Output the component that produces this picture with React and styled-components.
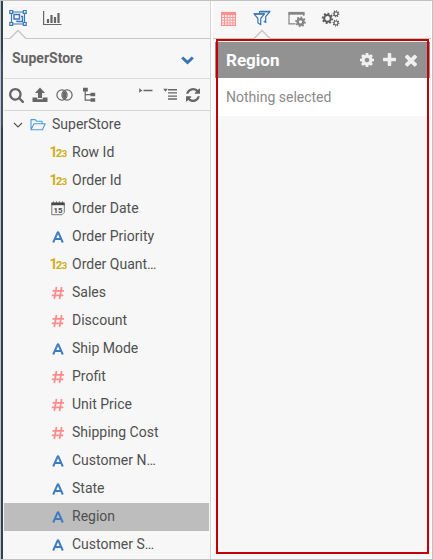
import React from "react";
import styled, { createGlobalStyle } from "styled-components";

const Global = createGlobalStyle`
  * { box-sizing: border-box; }
  body { margin: 0; font-family: Roboto, "Liberation Sans", sans-serif; color: #555; }
`;

const Frame = styled.div`
  display: flex;
  width: 433px;
  height: 560px;
  overflow: hidden;
  background: #fff;
  border: 1px solid #c2c2c2;
`;
const Rail = styled.div`
  width: 2px;
  background: linear-gradient(#2d4350 0 47px, #3d5168 62px 100px, #3d5168 124px, #2d4350 128px);
`;
const LeftPanel = styled.section`
  width: 208px;
  padding-left: 1px;
  display: flex;
  flex-direction: column;
  background: #f7f7f7;
  border-right: 1px solid #d4d4d4;
`;
const RightPanel = styled.section`
  width: 219px;
  margin-left: 2px;
  background: #f7f7f7;
  border-right: 1px solid #fff;
`;
const Tabs = styled.nav`
  display: flex;
  height: 38px;
  border-bottom: 1px solid #c6c6c6;
`;
const Tab = styled.div`
  position: relative;
  width: ${(p) => p.$w}px;
  padding: 8px 0 0 ${(p) => p.$pad || 0}px;
`;
const Pointer = styled.svg`
  position: absolute;
  left: ${(p) => p.$x}px;
  top: 28px;
  display: block;
`;
const Glyph = styled.svg`
  display: block;
  flex: none;
  margin-left: ${(p) => p.$ml || 0}px;
  margin-top: ${(p) => p.$mt || 0}px;
  overflow: visible;
`;
const Source = styled.div`
  display: flex;
  align-items: center;
  justify-content: space-between;
  height: 40px;
  padding: 0 16px 2px 8px;
  font-size: 14px;
  font-weight: 700;
  color: #666;
  border-bottom: 1px solid #dcdcdc;
`;
const Tools = styled.div`
  display: flex;
  height: 32px;
  padding: 8px 0 0 5px;
  color: #666;
  border-bottom: 1px solid #d6d6d6;
`;
const Tree = styled.div`
  height: 448px;
`;
const Row = styled.div`
  display: flex;
  align-items: center;
  height: 28px;
  margin-right: 1px;
  padding-left: ${(p) => (p.$root ? 9 : 44)}px;
  font-size: 14px;
  color: #505050;
  background: ${(p) => (p.$selected ? "#bdbdbd" : "transparent")};
`;
const RowIcon = styled.span`
  display: flex;
  justify-content: center;
  align-items: center;
  width: 20px;
  height: 20px;
  margin-right: 4px;
`;
const Label = styled.span`
  white-space: nowrap;
  line-height: 18px;
  margin: -3px 0 0 ${(p) => p.$ml || 0}px;
`;
const Numeric = styled.span`
  display: flex;
  align-items: baseline;
  color: #cfaf22;
  font-weight: 700;
  line-height: 14px;
  font-size: 14px;
  letter-spacing: -1.8px;
`;
const Small = styled.span`
  font-size: ${(p) => p.$size}px;
  letter-spacing: -0.6px;
`;
const Highlight = styled.div`
  position: relative;
  height: 515px;
  margin: 0 1px 0 2px;

  &::after {
    content: "";
    position: absolute;
    inset: 0 1px;
    border: 2px solid #c40000;
  }
`;
const FilterHead = styled.header`
  display: flex;
  align-items: center;
  height: 39px;
  padding: 0 13px 0 11px;
  border-top: 3px solid #f7f7f7;
  background: #929292;
  color: #f0f0f0;
  font-size: 17px;
  font-weight: 700;
`;
const HeadTitle = styled.span`
  flex: 1;
  color: #fff;
`;
const FilterBody = styled.div`
  height: 38px;
  padding: 0 11px;
  line-height: 38px;
  font-size: 14px;
  color: #8a8a8a;
  background: #fff;
`;

const FA = {
  search: "M1216 832q0-185-131.500-316.500t-316.500-131.500-316.500 131.500-131.500 316.500 131.500 316.500 316.500 131.500 316.500-131.500 131.500-316.500zm512 832q0 52-38 90t-90 38q-54 0-90-38l-343-342q-179 124-399 124-143 0-273.500-55.500t-225-150-150-225-55.500-273.500 55.500-273.500 150-225 225-150 273.500-55.500 273.500 55.500 225 150 150 225 55.500 273.500q0 220-124 399l343 343q37 37 37 90z",
  refresh: "M1639 1056q0 5-1 7-64 268-268 434.500t-478 166.500q-146 0-282.500-55t-243.500-157l-129 129q-19 19-45 19t-45-19-19-45v-448q0-26 19-45t45-19h448q26 0 45 19t19 45-19 45l-137 137q71 66 161 102t187 36q134 0 250-65t186-179q11-17 53-117 8-23 30-23h192q13 0 22.500 9.500t9.500 22.500zm25-800v448q0 26-19 45t-45 19h-448q-26 0-45-19t-19-45 19-45l138-138q-148-137-349-137-134 0-250 65t-186 179q-11 17-53 117-8 23-30 23h-199q-13 0-22.500-9.500t-9.500-22.500v-7q65-268 270-434.500t480-166.500q146 0 284 55.500t245 156.500l130-129q19-19 45-19t45 19 19 45z",
  cog: "M1152 896q0-106-75-181t-181-75-181 75-75 181 75 181 181 75 181-75 75-181zm512-109v222q0 12-8 23t-20 13l-185 28q-19 54-39 91 35 50 107 138 10 12 10 25t-9 23q-27 37-99 108t-94 71q-12 0-26-9l-138-108q-44 23-91 38-16 136-29 186-7 28-36 28h-222q-14 0-24.500-8.500t-11.500-21.500l-28-184q-49-16-90-37l-141 107q-10 9-25 9-14 0-25-11-126-114-165-168-7-10-7-23 0-12 8-23 15-21 51-66.500t54-70.500q-27-50-41-99l-183-27q-13-2-21-12.500t-8-23.500v-222q0-12 8-23t19-13l186-28q14-46 39-92-40-57-107-138-10-12-10-24 0-10 9-23 26-36 98.500-107.500t94.500-71.500q13 0 26 10l138 107q44-23 91-38 16-136 29-186 7-28 36-28h222q14 0 24.500 8.500t11.500 21.500l28 184q49 16 90 37l142-107q9-9 24-9 13 0 25 10 129 119 165 170 7 8 7 22 0 12-8 23-15 21-51 66.500t-54 70.500q26 50 41 98l183 28q13 2 21 12.500t8 23.500z",
  plus: "M1600 736v192q0 40-28 68t-68 28h-416v416q0 40-28 68t-68 28h-192q-40 0-68-28t-28-68v-416h-416q-40 0-68-28t-28-68v-192q0-40 28-68t68-28h416v-416q0-40 28-68t68-28h192q40 0 68 28t28 68v416h416q40 0 68 28t28 68z",
  times: "M1490 1322q0 40-28 68l-136 136q-28 28-68 28t-68-28l-294-294-294 294q-28 28-68 28t-68-28l-136-136q-28-28-28-68t28-68l294-294-294-294q-28-28-28-68t28-68l136-136q28-28 68-28t68 28l294 294 294-294q28-28 68-28t68 28l136 136q28 28 28 68t-28 68l-294 294 294 294q28 28 28 68z",
};

const Fa = ({ name, size, box = "0 0 1792 1792", ...rest }) => (
  <Glyph width={size} height={size} viewBox={box} fill="currentColor" {...rest}>
    <path d={FA[name]} />
  </Glyph>
);

const Caret = ({ x }) => (
  <Pointer $x={x} width="18" height="10" viewBox="0 0 18 10">
    <path d="M1 10 9 1.500 17 10z" fill="#f7f7f7" />
    <path d="M1 9.500 9 1.500 17 9.500" fill="none" stroke="#c6c6c6" strokeWidth="1.300" />
  </Pointer>
);

const GroupIcon = () => (
  <Glyph width="18" height="18" viewBox="0 0 18 18" fill="none" stroke="#3a78b8">
    <path d="M2.500 3h13v12h-13z" strokeWidth="1.200" />
    <path d="M5 5.500h5.500v4.500H5zM12 7.500h1.500v5H8V11.500" strokeWidth="1.400" />
    <g fill="#f7f7f7" strokeWidth="1.200">
      <path d="M.8 1.500h2.900v2.900H.8zM14.300 1.500h2.900v2.900h-2.900zM.8 13.500h2.900v2.900H.8zM14.300 13.500h2.900v2.900h-2.900z" />
    </g>
  </Glyph>
);
const ChartIcon = () => (
  <Glyph width="19" height="18" viewBox="0 0 19 18" fill="none" stroke="#666">
    <path d="M.6 2v13.500H18.500" strokeWidth="1.200" />
    <path d="M5 14v-4M8.500 14V6M12 14V8M15.500 14V4" strokeWidth="2.200" />
  </Glyph>
);
const GridIcon = () => (
  <Glyph width="15" height="18" viewBox="0 0 15 18" fill="none" stroke="#ff8f8f">
    <path d="M0 4.500h15" strokeWidth="3.200" />
    <path d="M.6 4v12.400h13.800V4" strokeWidth="1.200" />
    <path d="M3.500 6v10M6.300 6v10M9 6v10M11.800 6v10M.5 8.500h14M.5 11.200h14M.5 13.900h14" strokeWidth=".9" />
  </Glyph>
);
const FilterIcon = () => (
  <Glyph width="18" height="18" viewBox="0 0 18 18" fill="none" stroke="#3a78b8" strokeWidth="1.200" strokeLinejoin="round">
    <path d="M6.500 4V2.500H17L12.700 7.700v5.800L10.800 12" />
    <path d="M1 4.800h10.500L7.700 9.500v6.200L4.900 13.800V9.500z" fill="#f7f7f7" />
    <path d="M1 5h10.500M7 2.700H17" strokeWidth="1.700" />
  </Glyph>
);
const WindowGearIcon = () => (
  <Glyph width="18" height="18" viewBox="0 0 18 18" fill="none" stroke="#858585">
    <path d="M7.500 14.800H1V4H15.800V7" strokeWidth="1.200" />
    <path d="M.5 4.300h16" strokeWidth="2.800" />
    <g transform="translate(12.500 12.800)">
      <circle r="2.900" strokeWidth="2.500" />
      <circle r="4.500" strokeWidth="1.700" pathLength="16" strokeDasharray="1 1" />
    </g>
  </Glyph>
);
const Gear = ({ x, y, r, w }) => (
  <g transform={`translate(${x} ${y})`}>
    <circle r={r} strokeWidth={w} />
    <circle r={r + w * 0.75} strokeWidth={w * 0.9} pathLength="16" strokeDasharray="1 1" />
  </g>
);
const GearsIcon = () => (
  <Glyph width="18" height="18" viewBox="0 0 18 18" fill="none" stroke="#5c5c5c">
    <Gear x={5.500} y={9.400} r={3.300} w={2} />
    <Gear x={14} y={4.800} r={2} w={1.200} />
    <Gear x={14} y={14} r={2} w={1.200} />
  </Glyph>
);
const UploadIcon = () => (
  <Glyph width="16" height="16" viewBox="0 0 16 16" fill="currentColor" $ml={8}>
    <path d="M8 .5 13 6H10v5H6V6H3zM.5 10.500h4.800v1.800h5.400v-1.800h4.800v4.500H.5z" />
  </Glyph>
);
const RingsIcon = () => (
  <Glyph width="17" height="16" viewBox="0 0 17 16" fill="none" stroke="currentColor" strokeWidth="1.200" $ml={8}>
    <circle cx="6" cy="8" r="5.100" />
    <circle cx="11" cy="8" r="5.100" />
    <path d="M8.500 4.800a4.300 4.300 0 0 1 0 6.400a4.300 4.300 0 0 1 0-6.400" fill="currentColor" />
  </Glyph>
);
const HierarchyIcon = () => (
  <Glyph width="13" height="16" viewBox="0 0 13 16" fill="currentColor" $ml={10}>
    <path d="M0 .8h4.800v3.700H0zM7.500 5.800h4.700v3.500H7.500zM7.500 11.300h4.700v3.500H7.500z" />
    <path d="M2.200 4v9.200H8M2.200 7.600H8" fill="none" stroke="currentColor" strokeWidth="1.200" />
  </Glyph>
);
const CollapseIcon = () => (
  <Glyph width="14" height="16" viewBox="0 0 14 16" fill="currentColor" $ml={43}>
    <path d="M.2 1.300 3.300 3.500.2 5.700zM4.500 2.700h9v1.500h-9z" />
  </Glyph>
);
const ExpandIcon = () => (
  <Glyph width="15" height="16" viewBox="0 0 15 16" fill="currentColor" $ml={10}>
    <path d="M.2 1.800h4.600L2.500 4.800zM5 2h9v1.500H5zM5 5.300h9v1.300H5zM5 8.400h9v1.300H5zM5 11.300h9v1.400H5z" />
  </Glyph>
);
const FolderIcon = () => (
  <Glyph width="16" height="13" viewBox="0 0 16 13" fill="none" stroke="#4a9ae0" strokeWidth="1.100" strokeLinejoin="round" $ml={7} $mt={-1}>
    <path d="M1 11V1.600h4.200l1.300 1.600H12v2.500M1 11.700 4 5.700H15.200L12.400 11.700z" />
  </Glyph>
);
const DateIcon = () => (
  <Glyph width="14" height="15" viewBox="0 0 14 15" $mt={-1}>
    <path d="M.8 3v10.700h10.200l2.300-2.300V3" fill="none" stroke="#777" strokeWidth="1" />
    <path d="M.3 1.400h13.400v2.800H.3z" fill="#484848" />
    <path d="M2.500.500v1M5.500.500v1M8.500.500v1M11.500.500v1" stroke="#484848" />
    <text x="7" y="11.600" textAnchor="middle" fontSize="7.800" fontWeight="700" fontFamily="Roboto, sans-serif" fill="#484848">15</text>
  </Glyph>
);
const HashIcon = () => (
  <Glyph width="14" height="14" viewBox="0 0 14 14" fill="none" stroke="#ff8a8a" strokeWidth="1.700" $mt={-1}>
    <path d="M5.500 1 3.300 13M10.700 1 8.500 13M1.500 4.800H13M.8 9.300H12.300" />
  </Glyph>
);
const TextIcon = () => (
  <Glyph width="12" height="12" viewBox="0 0 12 12" fill="none" stroke="#3d7cc0" strokeWidth="2" $mt={-1}>
    <path d="M1.200 11.500 5.800 1.200h.4L10.800 11.500M3 8h6" strokeLinejoin="bevel" />
  </Glyph>
);
const NumberIcon = () => (
  <Numeric>
    1<Small $size={11.500}>2</Small><Small $size={9.500}>3</Small>
  </Numeric>
);

const icons = { number: NumberIcon, date: DateIcon, text: TextIcon, hash: HashIcon };
const fields = [
  ["number", "Row Id"],
  ["number", "Order Id"],
  ["date", "Order Date"],
  ["text", "Order Priority"],
  ["number", "Order Quant…"],
  ["hash", "Sales"],
  ["hash", "Discount"],
  ["text", "Ship Mode"],
  ["hash", "Profit"],
  ["hash", "Unit Price"],
  ["hash", "Shipping Cost"],
  ["text", "Customer N…"],
  ["text", "State"],
  ["text", "Region"],
  ["text", "Customer S…"],
];

export default function App() {
  return (
    <>
      <Global />
      <Frame>
        <Rail />
        <LeftPanel>
          <Tabs>
            <Tab $w={39} $pad={5}><GroupIcon /><Caret x={5} /></Tab>
            <Tab $w={30}><ChartIcon /></Tab>
          </Tabs>
          <Source>
            SuperStore
            <Glyph width="13" height="9" viewBox="0 0 13 9" fill="none" stroke="#3a73b0" strokeWidth="3" $mt={5}>
              <path d="M1.200 1.500 6.500 6.500 11.800 1.500" />
            </Glyph>
          </Source>
          <Tools>
            <Fa name="search" size={15} $mt={1} box="64 128 1664 1664" />
            <UploadIcon />
            <RingsIcon />
            <HierarchyIcon />
            <CollapseIcon />
            <ExpandIcon />
            <Fa name="refresh" size={14} $ml={8} $mt={1} box="128 128 1536 1536" />
          </Tools>
          <Tree>
            <Row $root>
              <Glyph width="10" height="6" viewBox="0 0 10 6" fill="none" stroke="#555" strokeWidth="1.100" $mt={-1}>
                <path d="M1 1 5 5 9 1" />
              </Glyph>
              <FolderIcon />
              <Label $ml={6}>SuperStore</Label>
            </Row>
            {fields.map(([type, name]) => {
              const Icon = icons[type];
              return (
                <Row key={name} $selected={name === "Region"}>
                  <RowIcon><Icon /></RowIcon>
                  <Label>{name}</Label>
                </Row>
              );
            })}
          </Tree>
        </LeftPanel>
        <RightPanel>
          <Tabs>
            <Tab $w={40} $pad={8}><GridIcon /></Tab>
            <Tab $w={35}><FilterIcon /><Caret x={0} /></Tab>
            <Tab $w={34}><WindowGearIcon /></Tab>
            <Tab $w={20}><GearsIcon /></Tab>
          </Tabs>
          <Highlight>
            <FilterHead>
              <HeadTitle>Region</HeadTitle>
              <Fa name="cog" size={14} box="128 128 1536 1536" />
              <Fa name="plus" size={13} $ml={9} $mt={-1} box="192 128 1408 1408" />
              <Fa name="times" size={12} $ml={9} box="302 302 1188 1188" />
            </FilterHead>
            <FilterBody>Nothing selected</FilterBody>
          </Highlight>
        </RightPanel>
      </Frame>
    </>
  );
}
